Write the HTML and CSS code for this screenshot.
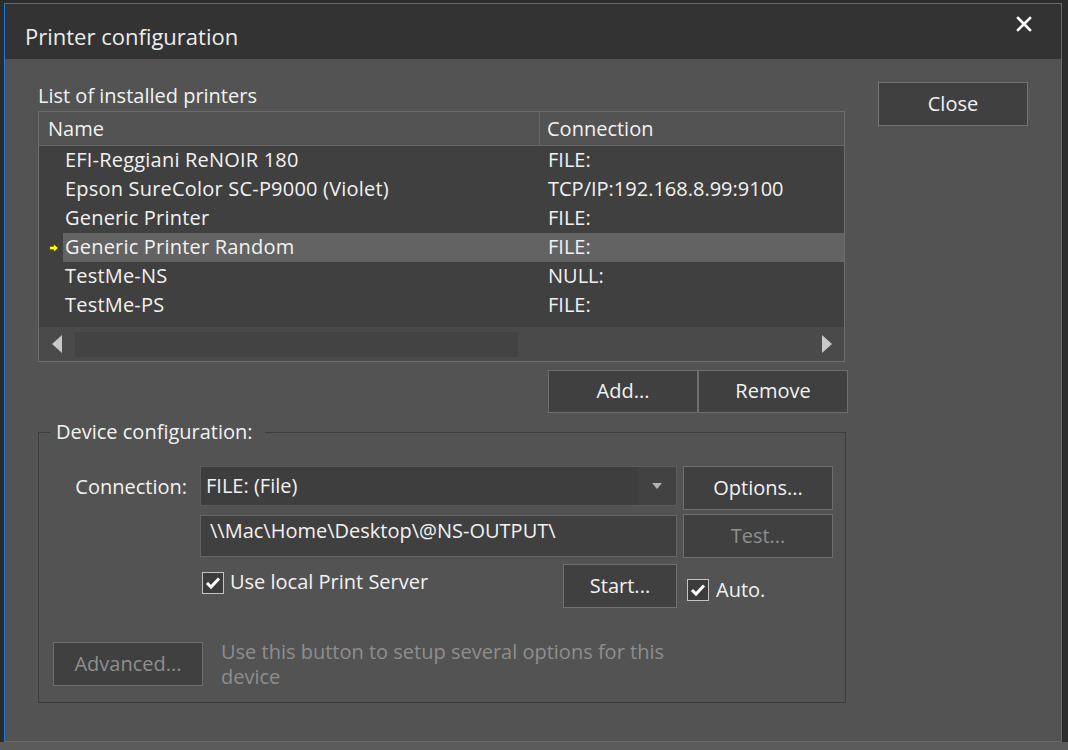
FILE: index.html
```html
<!DOCTYPE html>
<html>
<head>
<meta charset="utf-8">
<link rel="stylesheet" href="styles.css">
</head>
<body>
<div class="window">
  <div class="titlebar">
    <div class="title">Printer configuration</div>
    <svg class="x-icon" width="16" height="16" viewBox="0 0 16 16"><path d="M2 2 L14 14 M14 2 L2 14" stroke="#ffffff" stroke-width="2.6" stroke-linecap="square"/></svg>
  </div>
  <div class="content">
    <div class="left">
      <div class="list-label">List of installed printers</div>
      <div class="table">
        <div class="thead">
          <div class="th th-name">Name</div>
          <div class="th th-conn">Connection</div>
        </div>
        <div class="tbody">
          <div class="row"><div class="mark"></div><div class="cell name">EFI-Reggiani ReNOIR 180</div><div class="cell conn">FILE:</div></div>
          <div class="row"><div class="mark"></div><div class="cell name">Epson SureColor SC-P9000 (Violet)</div><div class="cell conn">TCP/IP:192.168.8.99:9100</div></div>
          <div class="row"><div class="mark"></div><div class="cell name">Generic Printer</div><div class="cell conn">FILE:</div></div>
          <div class="row selected"><div class="mark"><svg width="10" height="10" viewBox="0 0 10 10"><path d="M0.5 3.2 H4.5 V0.6 L9.4 5 L4.5 9.4 V6.8 H0.5 Z" fill="#ffff00" stroke="#4a4a00" stroke-width="0.9"/></svg></div><div class="cell name">Generic Printer Random</div><div class="cell conn">FILE:</div></div>
          <div class="row"><div class="mark"></div><div class="cell name">TestMe-NS</div><div class="cell conn">NULL:</div></div>
          <div class="row"><div class="mark"></div><div class="cell name">TestMe-PS</div><div class="cell conn">FILE:</div></div>
        </div>
        <div class="hscroll">
          <div class="sbtn"><svg width="10" height="18" viewBox="0 0 10 18"><path d="M10 0 L0 9 L10 18 Z" fill="#c8c8c8"/></svg></div>
          <div class="strack"><div class="sthumb"></div></div>
          <div class="sbtn"><svg width="10" height="18" viewBox="0 0 10 18"><path d="M0 0 L10 9 L0 18 Z" fill="#c8c8c8"/></svg></div>
        </div>
      </div>
      <div class="list-buttons">
        <div class="btn w150">Add...</div>
        <div class="btn w150">Remove</div>
      </div>
      <div class="group">
        <div class="group-title">Device configuration:</div>
        <div class="grow r1">
          <div class="flabel">Connection:</div>
          <div class="combo">
            <div class="combo-text">FILE: (File)</div>
            <div class="combo-btn"><svg width="10" height="6" viewBox="0 0 10 6"><path d="M0 0 H10 L5 6 Z" fill="#b0b0b0"/></svg></div>
          </div>
          <div class="btn w150 h44 opt">Options...</div>
        </div>
        <div class="grow r2">
          <div class="path">\\Mac\Home\Desktop\@NS-OUTPUT\</div>
          <div class="btn w150 h44 disabled test">Test...</div>
        </div>
        <div class="grow r3">
          <div class="chk-wrap local">
            <div class="chk"><svg width="16" height="14" viewBox="0 0 16 14"><path d="M2 7 L6 11 L14 2.5" fill="none" stroke="#ffffff" stroke-width="3"/></svg></div>
            <span>Use local Print Server</span>
          </div>
          <div class="btn start">Start...</div>
          <div class="chk-wrap auto">
            <div class="chk"><svg width="16" height="14" viewBox="0 0 16 14"><path d="M2 7 L6 11 L14 2.5" fill="none" stroke="#ffffff" stroke-width="3"/></svg></div>
            <span>Auto.</span>
          </div>
        </div>
        <div class="grow r4">
          <div class="btn w150 h44 disabled">Advanced...</div>
          <div class="hint">Use this button to setup several options for this device</div>
        </div>
      </div>
    </div>
    <div class="right">
      <div class="btn close">Close</div>
    </div>
  </div>
</div>
</body>
</html>
```
FILE: styles.css
```css
html, body {
  margin: 0;
  padding: 0;
}
body {
  width: 1068px;
  height: 750px;
  overflow: hidden;
  background: linear-gradient(to bottom, #2c2c2c 0, #2c2c2c 742px, #5b5b5b 742px);
  font-family: "Open Sans", "Noto Sans", sans-serif;
  font-size: 20px;
  color: #f2f2f2;
}
.window {
  box-sizing: border-box;
  width: 1058px;
  height: 739px;
  margin: 3px 0 0 4px;
  border: 1px solid #1a7dd4;
  background: #535353;
  display: flex;
  flex-direction: column;
}
.titlebar {
  height: 55px;
  flex: none;
  background: #333333;
  display: flex;
  align-items: flex-start;
}
.title {
  padding: 17px 0 0 20px;
  line-height: 30px;
  font-size: 22px;
  color: #ececec;
}
.x-icon {
  margin: 12px 29px 0 auto;
}
.content {
  display: flex;
  padding: 23px 0 0 33px;
}
.left {
  width: 810px;
}
.right {
  margin-left: 30px;
}
.list-label {
  box-sizing: border-box;
  height: 29px;
  line-height: 28px;
}
.table {
  box-sizing: border-box;
  width: 807px;
  height: 251px;
  border: 1px solid #6c6c6c;
  background: #404040;
  display: flex;
  flex-direction: column;
}
.thead {
  display: grid;
  grid-template-columns: 501px 1fr;
  height: 33px;
  border-bottom: 1px solid #666;
  background: #535353;
  flex: none;
}
.th {
  line-height: 33px;
}
.th-name {
  padding-left: 9px;
  border-right: 1px solid #666;
}
.th-conn {
  padding-left: 7px;
}
.tbody {
  height: 181px;
  flex: none;
}
.row {
  display: grid;
  grid-template-columns: 24px 477px 1fr;
  height: 29px;
  line-height: 28px;
}
.mark {
  display: flex;
  align-items: center;
  padding-left: 10px;
}
.name {
  padding-left: 2px;
  white-space: nowrap;
  letter-spacing: 0.2px;
}
.conn {
  padding-left: 8px;
  white-space: nowrap;
}
.selected .name, .selected .conn {
  background: #636363;
}
.hscroll {
  height: 34px;
  flex: none;
  background: #4a4a4a;
  display: flex;
}
.sbtn {
  width: 35px;
  display: flex;
  align-items: center;
  justify-content: center;
}
.strack {
  flex: 1;
  padding: 5px 0 4px 1px;
}
.sthumb {
  width: 443px;
  height: 25px;
  background: #434343;
}
.list-buttons {
  display: flex;
  justify-content: flex-end;
  margin-top: 8px;
}
.btn {
  box-sizing: border-box;
  border: 1px solid #6e6e6e;
  background: #404040;
  display: flex;
  align-items: center;
  justify-content: center;
  color: #f2f2f2;
  height: 43px;
  padding-bottom: 2px;
}
.w150 { width: 150px; }
.h44 { height: 44px; }
.disabled { color: #8e8e8e; }
.close {
  width: 150px;
  height: 44px;
  border-color: #747474;
}
.group {
  position: relative;
  box-sizing: border-box;
  width: 808px;
  height: 271px;
  margin-top: 19px;
  border: 1px solid #3c3c3c;
  padding-top: 33px;
}
.group-title {
  position: absolute;
  top: -15px;
  left: 11px;
  padding: 0 12px 0 6px;
  background: #535353;
  line-height: 28px;
}
.grow {
  display: flex;
  align-items: flex-start;
}
.flabel {
  width: 148px;
  margin-right: 13px;
  text-align: right;
  line-height: 41px;
}
.combo {
  box-sizing: border-box;
  width: 477px;
  height: 40px;
  border: 1px solid #5c5c5c;
  background: #3e3e3e;
  display: flex;
}
.combo-text {
  flex: 1;
  padding-left: 5px;
  line-height: 38px;
}
.combo-btn {
  width: 38px;
  background: #424242;
  display: flex;
  align-items: center;
  justify-content: center;
}
.opt { margin-left: 6px; }
.r2 {
  margin-top: 4px;
  padding-left: 161px;
}
.path {
  box-sizing: border-box;
  width: 477px;
  height: 42px;
  margin-top: 1px;
  border: 1px solid #646464;
  background: #404040;
  padding-left: 9px;
  line-height: 30px;
}
.test { margin-left: 6px; }
.r3 {
  margin-top: 6px;
  padding-left: 161px;
}
.chk-wrap {
  display: flex;
  align-items: center;
}
.chk {
  box-sizing: border-box;
  width: 22px;
  height: 22px;
  border: 1px solid #c4c4c4;
  background: #3c3c3c;
  display: flex;
  align-items: center;
  justify-content: center;
}
.chk-wrap span { margin-left: 6px; margin-top: -3px; }
.local {
  width: 361px;
  margin-left: 2px;
  margin-top: 7px;
}
.start {
  width: 114px;
  height: 44px;
}
.auto {
  margin-left: 10px;
  margin-top: 13px;
}
.auto span { margin-left: 7px; margin-top: -1px; }
.r4 {
  margin-top: 34px;
  padding-left: 14px;
}
.hint {
  width: 460px;
  margin-left: 18px;
  margin-top: -3px;
  line-height: 25px;
  color: #8e8e8e;
}
```
